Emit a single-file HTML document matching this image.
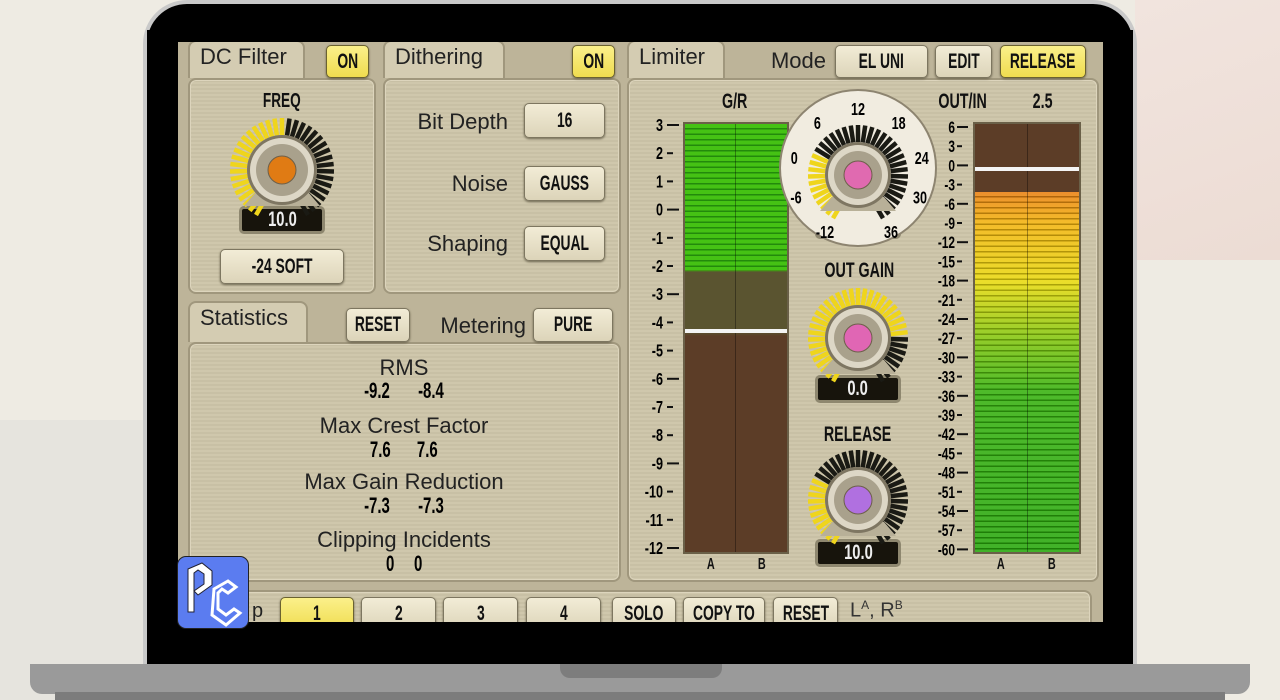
<!DOCTYPE html>
<html><head><meta charset="utf-8">
<style>
*{margin:0;padding:0;box-sizing:border-box}
body{width:1280px;height:700px;overflow:hidden;background:#eeebe3;position:relative;font-family:"Liberation Sans",sans-serif}
.a{position:absolute}
.c{display:inline-block;transform:scaleX(.68);white-space:nowrap;font-weight:bold}
.n{font-family:"Liberation Sans",sans-serif;font-weight:bold;color:#111;white-space:nowrap}
.btn{position:absolute;background:linear-gradient(#f2ecd6,#dcd4b9);border:1px solid #7d7660;border-radius:5px;box-shadow:0 1px 2px #6d6650;display:flex;align-items:center;justify-content:center;font-weight:bold;font-size:21px;color:#111;white-space:nowrap;overflow:visible}
.btn span{display:inline-block;transform:scaleX(.66)}
.y{background:linear-gradient(#fbf08a,#efdc4f);border-color:#6b6230}
.pan{position:absolute;border:2px solid #a0977d;border-radius:8px;background:repeating-linear-gradient(0deg,#cfc7ac 0 2px,#c8c0a5 2px 4px);box-shadow:inset 0 0 0 1px #ddd5bd}
.tab{position:absolute;background:#d4ccb2;border:2px solid #a0977d;border-bottom:none;border-radius:8px 8px 0 0;font-size:22px;color:#222;padding:2px 10px;white-space:nowrap}
.lbl{position:absolute;font-size:22px;color:#222;text-align:right;white-space:nowrap}
.st{position:absolute;left:188px;width:432px;text-align:center;font-size:22px;color:#222}
.sv{position:absolute;left:188px;width:432px;text-align:center}
.sv b{display:inline-block;margin:0 8px;font-size:22px;transform:scaleX(.68)}
.disp{position:absolute;background:#17140c;border:3px solid #8e876f;border-radius:5px;color:#eee;font-weight:bold;font-size:21px;text-align:center;line-height:21px}
.disp span{display:inline-block;transform:scaleX(.7)}
</style></head><body>
<div class="a" style="left:1135px;top:0;width:145px;height:260px;background:linear-gradient(160deg,#f1e4de,#ecdcd4)"></div>
<div class="a" style="left:0;top:420px;width:160px;height:280px;background:#e6e4de"></div>
<div class="a" style="left:143px;top:0;width:994px;height:668px;background:#c9c9c9;border-radius:44px 44px 0 0"></div>
<div class="a" style="left:147px;top:4px;width:986px;height:664px;background:#000;border-radius:40px 40px 0 0"></div>
<div class="a" style="left:30px;top:664px;width:1220px;height:30px;background:#9a9a9a;border-radius:0 0 12px 12px"></div>
<div class="a" style="left:55px;top:692px;width:1170px;height:8px;background:#7c7c7c"></div>
<div class="a" style="left:560px;top:664px;width:162px;height:14px;background:#7d7d7d;border-radius:0 0 10px 10px"></div>
<div class="a" style="left:178px;top:42px;width:925px;height:580px;background:#bdb499"></div>
<div class="a" style="left:0;top:0;width:1280px;height:700px">
<div class="pan" style="left:188px;top:78px;width:188px;height:216px"></div>
<div class="tab" style="left:188px;top:40px;width:117px;height:38px">DC Filter</div>
<div class="btn y" style="left:326px;top:45px;width:43px;height:33px"><span>ON</span></div>
<div class="a n" style="left:252px;top:90px;width:60px;text-align:center;font-size:20px"><span class="c">FREQ</span></div>
<div class="disp" style="left:239px;top:206px;width:86px;height:28px"><span>10.0</span></div>
<div class="btn" style="left:220px;top:249px;width:124px;height:35px"><span>-24 SOFT</span></div>

<div class="pan" style="left:383px;top:78px;width:238px;height:216px"></div>
<div class="tab" style="left:383px;top:40px;width:122px;height:38px">Dithering</div>
<div class="btn y" style="left:572px;top:45px;width:43px;height:33px"><span>ON</span></div>
<div class="lbl" style="left:390px;top:109px;width:118px">Bit Depth</div>
<div class="btn" style="left:524px;top:103px;width:81px;height:35px"><span>16</span></div>
<div class="lbl" style="left:390px;top:171px;width:118px">Noise</div>
<div class="btn" style="left:524px;top:166px;width:81px;height:35px"><span>GAUSS</span></div>
<div class="lbl" style="left:390px;top:231px;width:118px">Shaping</div>
<div class="btn" style="left:524px;top:226px;width:81px;height:35px"><span>EQUAL</span></div>

<div class="pan" style="left:188px;top:342px;width:433px;height:240px"></div>
<div class="tab" style="left:188px;top:301px;width:120px;height:41px">Statistics</div>
<div class="btn" style="left:346px;top:308px;width:64px;height:34px"><span>RESET</span></div>
<div class="lbl" style="left:420px;top:313px;width:106px">Metering</div>
<div class="btn" style="left:533px;top:308px;width:80px;height:34px"><span>PURE</span></div>
<div class="st" style="top:355px">RMS</div>
<div class="sv" style="top:378px"><b>-9.2</b><b>-8.4</b></div>
<div class="st" style="top:413px">Max Crest Factor</div>
<div class="sv" style="top:437px"><b>7.6</b><b>7.6</b></div>
<div class="st" style="top:469px">Max Gain Reduction</div>
<div class="sv" style="top:493px"><b>-7.3</b><b>-7.3</b></div>
<div class="st" style="top:527px">Clipping Incidents</div>
<div class="sv" style="top:551px"><b>0</b><b>0</b></div>

<div class="pan" style="left:627px;top:78px;width:472px;height:504px"></div>
<div class="tab" style="left:627px;top:40px;width:98px;height:38px">Limiter</div>
<div class="lbl" style="left:750px;top:48px;width:76px">Mode</div>
<div class="btn" style="left:835px;top:45px;width:93px;height:33px"><span>EL UNI</span></div>
<div class="btn" style="left:935px;top:45px;width:57px;height:33px"><span>EDIT</span></div>
<div class="btn y" style="left:1000px;top:45px;width:86px;height:33px"><span>RELEASE</span></div>
<div class="a n" style="left:705px;top:90px;width:60px;text-align:center;font-size:21px"><span class="c">G/R</span></div>
<div class="a n" style="left:925px;top:90px;width:75px;text-align:center;font-size:21px"><span class="c">OUT/IN</span></div>
<div class="a n" style="left:1023px;top:90px;width:40px;text-align:center;font-size:21px"><span class="c">2.5</span></div>
<div class="a" style="left:683px;top:122px;width:106px;height:432px;border:2px solid #6a6048;background:linear-gradient(#2fa70f 0,#3bb00c 146px,#5a5430 148px,#5a5430 208px,#5c3d27 212px,#5c3d27 100%)"></div>
<div class="a" style="left:685px;top:124px;width:102px;height:146px;background:repeating-linear-gradient(#45c214 0 4px,#238a0c 4px 5.5px)"></div>
<div class="a" style="left:735px;top:124px;width:1px;height:428px;background:rgba(0,0,0,.35)"></div>
<div class="a" style="left:685px;top:329px;width:102px;height:4px;background:#f4f4f4"></div>
<div class="a" style="left:973px;top:122px;width:108px;height:432px;border:2px solid #6a6048;background:#5c3d27"></div>
<div class="a" style="left:975px;top:192px;width:104px;height:360px;background:repeating-linear-gradient(rgba(255,255,255,.12) 0 4px,rgba(0,0,0,.25) 4px 5.5px),linear-gradient(#e97f10 0,#f2b20c 30px,#e8d90d 90px,#7dc40d 150px,#35b00d 200px,#27a70b 100%)"></div>
<div class="a" style="left:1027px;top:124px;width:1px;height:428px;background:rgba(0,0,0,.35)"></div>
<div class="a" style="left:975px;top:167px;width:104px;height:4px;background:#f4f4f4"></div>
<div class="a n" style="left:705px;top:556px;font-size:16px"><span class="c">A</span></div>
<div class="a n" style="left:756px;top:556px;font-size:16px"><span class="c">B</span></div>
<div class="a n" style="left:995px;top:556px;font-size:16px"><span class="c">A</span></div>
<div class="a n" style="left:1046px;top:556px;font-size:16px"><span class="c">B</span></div>
<div class="disp" style="left:815px;top:211px;width:86px;height:28px"><span>6.0</span></div>
<div class="a n" style="left:808px;top:259px;width:100px;text-align:center;font-size:21px"><span class="c">OUT GAIN</span></div>
<div class="disp" style="left:815px;top:375px;width:86px;height:28px"><span>0.0</span></div>
<div class="a n" style="left:808px;top:423px;width:100px;text-align:center;font-size:21px"><span class="c">RELEASE</span></div>
<div class="disp" style="left:815px;top:539px;width:86px;height:28px"><span>10.0</span></div>
<div class="pan" style="left:188px;top:590px;width:904px;height:50px"></div>
<div class="a" style="left:252px;top:600px;font-size:20px;color:#222">p</div>
<div class="btn y" style="left:280px;top:597px;width:74px;height:34px"><span>1</span></div>
<div class="btn" style="left:361px;top:597px;width:75px;height:34px"><span>2</span></div>
<div class="btn" style="left:443px;top:597px;width:75px;height:34px"><span>3</span></div>
<div class="btn" style="left:526px;top:597px;width:75px;height:34px"><span>4</span></div>
<div class="btn" style="left:612px;top:597px;width:64px;height:34px"><span>SOLO</span></div>
<div class="btn" style="left:683px;top:597px;width:82px;height:34px"><span>COPY TO</span></div>
<div class="btn" style="left:773px;top:597px;width:65px;height:34px"><span>RESET</span></div>
<div class="a" style="left:850px;top:598px;font-size:20px;color:#333">L<sup style="font-size:12px">A</sup>, R<sup style="font-size:12px">B</sup></div>
<svg id="sv" class="a" style="left:0;top:0" width="1280" height="700"></svg>
</div>
<div class="a" style="left:147px;top:622px;width:986px;height:42px;background:#000"></div>
<div class="a" style="left:1103px;top:30px;width:30px;height:600px;background:#000"></div>
<div class="a" style="left:147px;top:30px;width:31px;height:600px;background:#000"></div>
<div class="a" style="left:178px;top:30px;width:925px;height:12px;background:#000"></div>
<div class="a" style="left:177px;top:556px;width:72px;height:73px;background:#5b7cf0;border-radius:9px;border:1px solid #222;overflow:hidden">
<svg width="72" height="73" viewBox="0 0 72 73"><path d="M10 12 L24 6 L34 14 L34 28 L20 38 L16 34 L26 27 L26 17 L20 13 L16 16 L16 55 L10 55 Z" fill="#fff" stroke="#223" stroke-width="1"/><path d="M36 32 L50 24 L58 30 L50 36 L44 32 L40 36 L40 52 L48 58 L56 52 L62 56 L48 68 L34 58 Z" fill="none" stroke="#fff" stroke-width="3"/></svg>
</div>
<script>
var S=document.getElementById('sv'),h='';
function T(x,y,s,sz,anchor){return '<text transform="translate('+x+','+y+') scale(.7,1)" text-anchor="'+(anchor||'middle')+'" font-family="Liberation Sans,sans-serif" font-weight="bold" font-size="'+sz+'">'+s+'</text>';}
function knob(cx,cy,r,frac,col){
 var n=36,a0=-150,a1=150;
 for(var i=0;i<=n;i++){var a=(a0+(a1-a0)*i/n)*Math.PI/180;var on=i/n<=frac;
  var x1=cx+Math.sin(a)*(r-17),y1=cy-Math.cos(a)*(r-17),x2=cx+Math.sin(a)*r,y2=cy-Math.cos(a)*r;
  h+='<line x1="'+x1+'" y1="'+y1+'" x2="'+x2+'" y2="'+y2+'" stroke="'+(on?'#efd51c':'#1a1a14')+'" stroke-width="4.5"/>';}
 h+='<path d="M'+(cx-26)+' '+(cy+22)+' L'+(cx+26)+' '+(cy+22)+' L'+(cx+38)+' '+(cy+36)+' L'+(cx-38)+' '+(cy+36)+'Z" fill="#b8b098"/>';
 h+='<circle cx="'+cx+'" cy="'+cy+'" r="'+(r-17)+'" fill="#7e7662"/><circle cx="'+cx+'" cy="'+cy+'" r="'+(r-20)+'" fill="#ddd7c6"/><circle cx="'+cx+'" cy="'+cy+'" r="'+(r-26)+'" fill="#a9a18c"/><circle cx="'+cx+'" cy="'+cy+'" r="14" fill="'+col+'" stroke="#6d604a" stroke-width="1"/>';
}
h+='<circle cx="858" cy="168" r="78" fill="#f1ece0" stroke="#8d8470" stroke-width="2"/>';
knob(282,170,52,0.5,'#e07b14');
knob(858,175,50,0.3,'#e06ab0');
knob(858,338,50,0.78,'#e066b4');
knob(858,500,50,0.3,'#b070e0');
var lb=[['-12',-150],['-6',-110],['0',-75],['6',-38],['12',0],['18',38],['24',75],['30',110],['36',150]];
lb.forEach(function(l){var a=l[1]*Math.PI/180;h+=T(858+Math.sin(a)*66,175-Math.cos(a)*66+6,l[0],18);});
for(var i=0;i<16;i++){var y=125+i*28.2,v=3-i;h+=T(663,y+6,v,18,'end').replace('translate(663','translate(663')+'<line x1="667" y1="'+y+'" x2="'+(v%3==0?679:673)+'" y2="'+y+'" stroke="#111" stroke-width="2"/>';}
for(var i=0;i<23;i++){var y=127+i*19.2,v=6-3*i;h+=T(955,y+6,v,17,'end')+'<line x1="957" y1="'+y+'" x2="'+(i%2==0?968:962)+'" y2="'+y+'" stroke="#111" stroke-width="2"/>';}
S.innerHTML=h;
</script>
</body></html>
